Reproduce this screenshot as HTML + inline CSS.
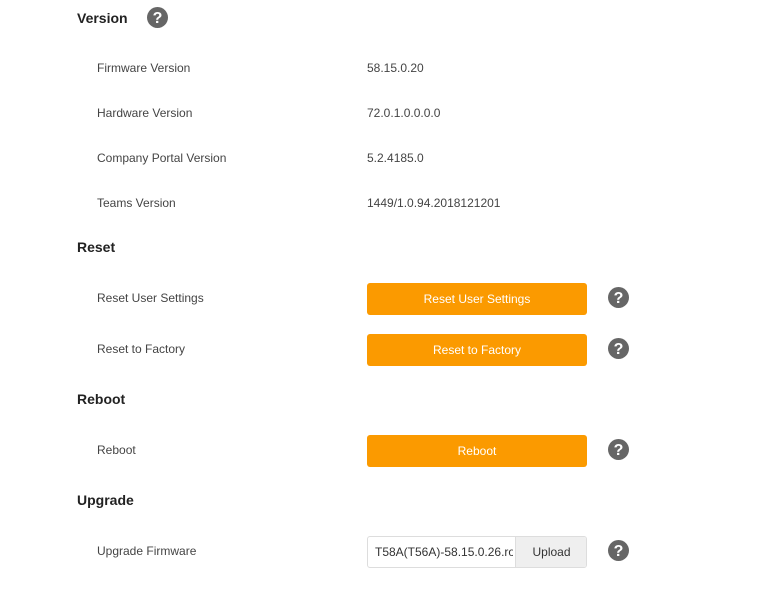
<!DOCTYPE html>
<html><head><style>
body{margin:0;width:757px;height:590px;background:#fff;font-family:"Liberation Sans",Arial,sans-serif;position:relative;overflow:hidden}
.h{position:absolute;left:77px;font-size:14px;font-weight:bold;color:#222;line-height:16px}
.l{position:absolute;left:97px;font-size:12px;color:#444;line-height:14px}
.v{position:absolute;left:367px;font-size:12px;color:#444;line-height:14px}
.b{position:absolute;left:367px;width:220px;height:32px;background:#fb9a00;border-radius:3px;color:#fff;font-size:12px;line-height:33px;text-align:center}
.q{position:absolute;width:21px;height:21px;border-radius:50%;background:#666;color:#fff;font-weight:bold;font-size:16px;line-height:23px;text-align:center}
</style></head><body>
<div class="h" style="top:10px">Version</div>
<div class="q" style="left:147px;top:7px">?</div>
<div class="l" style="top:61px">Firmware Version</div><div class="v" style="top:61px">58.15.0.20</div>
<div class="l" style="top:106px">Hardware Version</div><div class="v" style="top:106px">72.0.1.0.0.0.0</div>
<div class="l" style="top:151px">Company Portal Version</div><div class="v" style="top:151px">5.2.4185.0</div>
<div class="l" style="top:196px">Teams Version</div><div class="v" style="top:196px">1449/1.0.94.2018121201</div>
<div class="h" style="top:239px">Reset</div>
<div class="l" style="top:291px">Reset User Settings</div>
<div class="b" style="top:283px">Reset User Settings</div>
<div class="q" style="left:608px;top:287px">?</div>
<div class="l" style="top:342px">Reset to Factory</div>
<div class="b" style="top:334px">Reset to Factory</div>
<div class="q" style="left:608px;top:338px">?</div>
<div class="h" style="top:391px">Reboot</div>
<div class="l" style="top:443px">Reboot</div>
<div class="b" style="top:435px">Reboot</div>
<div class="q" style="left:608px;top:439px">?</div>
<div class="h" style="top:492px">Upgrade</div>
<div class="l" style="top:544px">Upgrade Firmware</div>
<div style="position:absolute;left:367px;top:536px;width:218px;height:30px;border:1px solid #ddd;border-radius:3px;overflow:hidden;font-size:12px;line-height:30px;color:#333">
<div style="position:absolute;left:7px;top:0;width:138px;overflow:hidden;white-space:nowrap">T58A(T56A)-58.15.0.26.rom</div>
<div style="position:absolute;left:147px;top:0;width:71px;height:30px;background:#efefef;border-left:1px solid #ddd;text-align:center">Upload</div>
</div>
<div class="q" style="left:608px;top:540px">?</div>
</body></html>
